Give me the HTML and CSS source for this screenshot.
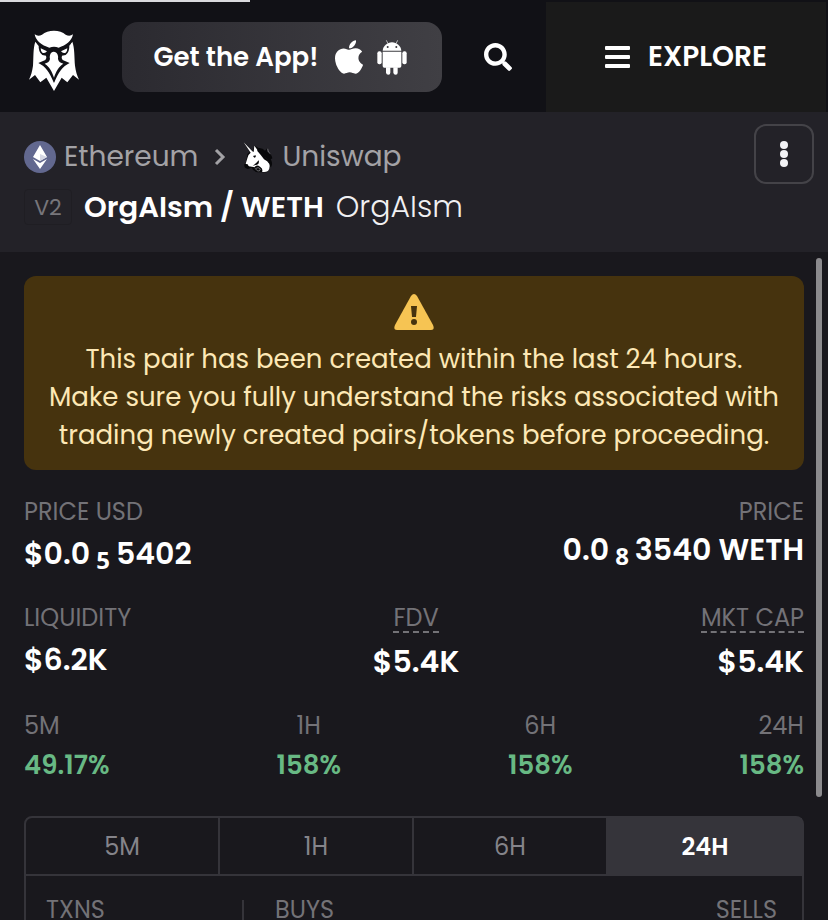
FILE: index.html
```html
<!DOCTYPE html>
<html lang="en">
<head>
<meta charset="utf-8">
<meta name="viewport" content="width=device-width, initial-scale=1">
<title>OrgAIsm / WETH</title>
<link rel="stylesheet" href="styles.css">
</head>
<body>
<div class="progress"></div>
<header class="topbar">
  <a class="logo" href="#" aria-label="Home">
    <svg viewBox="84 93 156 186" width="52" height="62" fill="#fff">
      <path d="M106 128C112 137 119 144 128 148L161 155L195 148C204 144 211 137 217 128C224 146 223 176 225 200C227 216 231 229 237 242L219 228L202 250L185 236L162 276L139 236L121 250L105 228L87 242C93 229 97 216 99 200C101 176 99 146 106 128Z"/>
      <path fill="#111116" d="M106 122Q112 136 116 139Q115 160 127 168L138 170Q141 176 136 183L115 192C137 202 148 220 162 252C176 220 187 202 209 192L188 183Q183 176 186 170L197 168Q209 160 208 139Q212 136 218 122L180 150L162 148L144 150Z"/>
      <path stroke="#111116" stroke-width="10" paint-order="stroke" d="M104 106Q114 114 126 107C143 91 181 91 197 107Q209 114 219 106C215 126 199 139 176 146Q162 141 148 146C124 139 108 126 104 106Z"/>
      <path stroke="#111116" stroke-width="8" paint-order="stroke" d="M161 158C151 159 148 170 150 180C148 189 142 192 134 194C149 204 156 218 162 236C168 218 175 204 190 194C182 192 176 189 174 180C176 170 172 159 161 158Z"/>
      <path d="M122 148L141 157Q135 165 127 161Q122 157 122 148ZM202 148L183 157Q189 165 197 161Q202 157 202 148Z"/>
    </svg>
  </a>
  <a class="app" href="#">
    <span>Get the App!</span>
    <svg viewBox="4 32 376 448" width="28" height="34" fill="#fff"><path d="M318.700 268.700c-.2-36.700 16.400-64.400 50-84.800-18.800-26.900-47.200-41.700-84.700-44.600-35.500-2.800-74.300 20.700-88.500 20.700-15 0-49.400-19.700-76.400-19.700C63.300 141.200 4 184.800 4 273.500q0 39.300 14.400 81.200c12.800 36.700 59 126.700 107.200 125.200 25.200-.6 43-17.900 75.800-17.900 31.800 0 48.300 17.900 76.400 17.900 48.600-.7 90.400-82.500 102.600-119.300-65.200-30.700-61.700-90-61.700-91.900zm-56.600-164.200c27.300-32.400 24.800-61.900 24-72.500-24.100 1.400-52 16.400-67.900 34.900-17.500 19.800-27.800 44.300-25.600 71.900 26.100 2 49.900-11.400 69.500-34.300z"/></svg>
    <svg viewBox="0 0 90 105" width="30" height="35" fill="#fff">
      <path d="M17 32C18 18 31 7 45 7S72 18 73 32Z"/>
      <path d="M28 1L33 11M62 1L57 11" stroke="#fff" stroke-width="2"/>
      <circle cx="32" cy="21" r="3" fill="#38373c"/><circle cx="58" cy="21" r="3" fill="#38373c"/>
      <path d="M17 35H73V78Q73 83 68 83H22Q17 83 17 78Z"/>
      <rect x="1" y="34" width="13" height="39" rx="6"/><rect x="76" y="34" width="13" height="39" rx="6"/>
      <path d="M27 82H40V98Q40 104 34 104T27 98ZM49 82H62V98Q62 104 56 104T49 98Z"/>
    </svg>
  </a>
  <button class="search" aria-label="Search">
    <svg viewBox="0 0 512 512" width="28" height="28" fill="#fff"><path d="M505 442.700L405.300 343c-4.500-4.500-10.600-7-17-7H372c27.600-35.300 44-79.700 44-128C416 93.100 322.900 0 208 0S0 93.100 0 208s93.100 208 208 208c48.300 0 92.700-16.400 128-44v16.300c0 6.400 2.500 12.500 7 17l99.700 99.700c9.400 9.400 24.600 9.400 33.900 0l28.300-28.300c9.400-9.400 9.400-24.600.1-34zM208 336c-70.700 0-128-57.200-128-128 0-70.700 57.200-128 128-128 70.700 0 128 57.200 128 128 0 70.700-57.200 128-128 128z"/></svg>
  </button>
  <button class="explore">
    <svg viewBox="0 0 25 22" width="25" height="22" fill="#fff"><rect width="25" height="4" rx="1"/><rect y="9" width="25" height="4" rx="1"/><rect y="18" width="25" height="4" rx="1"/></svg>
    <span>EXPLORE</span>
  </button>
</header>
<section class="pair">
  <div class="pair-info">
    <nav class="crumbs">
      <svg viewBox="0 0 32 32" width="32" height="32"><circle cx="16" cy="16" r="16" fill="#62688f"/><path fill="#fff" d="M16 4L23 16L16 20L9 16ZM9 18L16 22L23 18L16 28Z"/><path fill="#d5d7e4" d="M16 13L23 16L16 20Z"/></svg>
      <a href="#">Ethereum</a>
      <svg class="chevron" viewBox="0 0 12 18" width="12" height="18"><path d="M2 2L9 9L2 16" fill="none" stroke="#a3a2a6" stroke-width="3"/></svg>
      <svg viewBox="22 27 96 96" width="32" height="32">
        <path fill="#08080a" d="M27 31L53 58L60 41L72 48Q84 47 91 56L99 47L98 58Q111 66 113 79L108 82Q116 94 109 106L105 102Q106 114 97 121H68Q54 116 51 107L40 111Q27 109 29 97L34 91L38 66L45 60Z"/>
        <path fill="#fff" d="M27 31L53 58L57 60L59 41L69 55Q80 59 86 72Q98 81 102 90Q109 104 100 117Q91 122 82 119Q86 112 77 105Q65 96 60 106L52 104L42 103L33 95L39 76Q41 67 48 62Z"/>
        <path fill="#08080a" d="M68 52Q84 50 94 64Q107 72 111 80Q98 73 91 74Q104 84 106 98Q98 86 88 82Q79 69 68 57ZM55 72L63 70Q65 76 59 77ZM31 96L39 97L43 105L34 108ZM72 85Q75 95 67 98L54 101Q65 94 72 85Z"/>
        <path d="M62 110Q71 103 77 111L74 117Q68 119 62 110M99 50L101 60L107 65" fill="none" stroke="#99989d" stroke-width="2"/>
      </svg>
      <a href="#">Uniswap</a>
    </nav>
    <div class="title-row">
      <span class="version">V2</span>
      <h1>OrgAIsm / WETH</h1>
      <span class="name">OrgAIsm</span>
    </div>
  </div>
  <button class="more" aria-label="More options"><svg viewBox="0 0 8 26" width="8" height="26" fill="#f2f2f5"><circle cx="4" cy="4" r="4"/><circle cx="4" cy="13" r="4"/><circle cx="4" cy="22" r="4"/></svg></button>
</section>
<main class="content">
  <div class="scroll-thumb"></div>
  <div class="warning">
    <svg viewBox="0 0 40 36" width="40" height="36"><path fill="#f6c453" d="M17 2Q20 -2 23 2L39 31Q41 36 37 36H3Q-1 36 1 31Z"/><path fill="#46330e" d="M17 12H23L22 23H18Z"/><circle cx="20" cy="28" r="3" fill="#46330e"/></svg>
    <p>This pair has been created within the last 24 hours.<br>Make sure you fully understand the risks associated with trading newly created pairs/tokens before proceeding.</p>
  </div>
  <dl class="stats prices">
    <div><dt>PRICE USD</dt><dd>$0.0<sub>5</sub>5402</dd></div>
    <div><dt>PRICE</dt><dd>0.0<sub>8</sub>3540 WETH</dd></div>
  </dl>
  <dl class="stats">
    <div><dt>LIQUIDITY</dt><dd>$6.2K</dd></div>
    <div class="hinted"><dt><abbr>FDV</abbr></dt><dd>$5.4K</dd></div>
    <div class="hinted"><dt><abbr>MKT CAP</abbr></dt><dd>$5.4K</dd></div>
  </dl>
  <dl class="stats changes">
    <div><dt>5M</dt><dd>49.17%</dd></div>
    <div><dt>1H</dt><dd>158%</dd></div>
    <div><dt>6H</dt><dd>158%</dd></div>
    <div><dt>24H</dt><dd>158%</dd></div>
  </dl>
  <section class="panel">
    <div class="tabs">
      <button>5M</button><button>1H</button><button>6H</button><button class="active">24H</button>
    </div>
    <div class="trades">
      <div class="txns">TXNS</div>
      <div class="sides"><span>BUYS</span><span>SELLS</span></div>
    </div>
  </section>
</main>
</body>
</html>
```
FILE: styles.css
```css
* { box-sizing: border-box; }
body {
  margin: 0;
  height: 100vh;
  display: flex;
  flex-direction: column;
  overflow: hidden;
  background: #19181d;
  color: #fff;
  font-family: Poppins, Inter, sans-serif;
  font-size: 26px;
}
svg { display: block; flex-shrink: 0; }
a { color: inherit; text-decoration: none; }
button { margin: 0; padding: 0; border: 0; background: none; color: inherit; font: inherit; }
.progress {
  position: absolute;
  top: 0;
  left: 0;
  width: 250px;
  height: 2px;
  background: #d9d9dd;
}
.topbar {
  flex: none;
  display: flex;
  align-items: center;
  height: 112px;
  padding: 2px 2px 0 28px;
  background: #111116;
}
.logo { margin: 8px 42px 0 0; }
.app {
  flex: 1;
  display: flex;
  align-items: center;
  justify-content: center;
  gap: 14px;
  height: 70px;
  padding-right: 3px;
  border-radius: 16px;
  background: linear-gradient(90deg, #2b2a30, #403f44);
  font-weight: 600;
  white-space: nowrap;
}
.app span { margin-right: 3px; }
.search { margin: 0 34px 0 42px; }
.explore {
  width: 280px;
  align-self: stretch;
  display: flex;
  align-items: center;
  justify-content: center;
  gap: 18px;
  background: #1a1a1a;
  font-size: 28px;
  font-weight: 600;
}
.pair {
  flex: none;
  display: flex;
  justify-content: space-between;
  align-items: flex-start;
  height: 140px;
  padding: 12px 14px 0 24px;
  background: #232228;
}
.crumbs {
  display: flex;
  align-items: center;
  gap: 8px;
  height: 40px;
  margin-top: 13px;
  color: #a3a2a6;
  font-size: 28px;
}
.chevron { margin: 0 8px; }
.title-row {
  display: flex;
  align-items: center;
  gap: 12px;
  height: 40px;
  margin-top: 10px;
  font-size: 29px;
}
.version {
  display: flex;
  align-items: center;
  justify-content: center;
  width: 48px;
  height: 36px;
  border: 1px solid #1f1e23;
  border-radius: 4px;
  color: #77767b;
  font-size: 22px;
}
h1 { margin: 0; font-size: inherit; font-weight: 600; }
.name { color: #f0f0f2; font-size: 30px; font-weight: 300; }
.more {
  display: flex;
  align-items: center;
  justify-content: center;
  width: 60px;
  height: 60px;
  border: 2px solid #444348;
  border-radius: 12px;
}
.content {
  position: relative;
  flex: 1;
  min-height: 0;
  overflow: hidden;
  padding: 24px 24px 0;
}
.scroll-thumb {
  position: absolute;
  top: 6px;
  right: 6px;
  width: 6px;
  height: 539px;
  border-radius: 3px;
  background: #8b8a8d;
}
.warning {
  display: flex;
  flex-direction: column;
  align-items: center;
  padding: 18px 20px 16px;
  border-radius: 12px;
  background: #46330e;
  color: #fde8b5;
}
.warning p { margin: 10px 0 0; line-height: 38px; text-align: center; }
.stats { display: flex; justify-content: space-between; margin: 24px 0 0; }
.stats div { text-align: center; }
.stats div:first-child { text-align: left; }
.stats div:last-child { text-align: right; }
dt { height: 36px; color: #737277; font-size: 24px; line-height: 36px; }
abbr { display: inline-block; line-height: 26px; border-bottom: 2px dashed #737277; }
dd { height: 40px; margin: 4px 0 0; font-size: 30px; font-weight: 600; line-height: 40px; }
.prices div:last-child dd { margin-top: 0; }
.hinted dd { margin-top: 6px; }
.stats + .stats { margin-top: 26px; }
sub { margin: 0 6px; font-family: "Noto Sans", sans-serif; font-size: 24px; font-weight: 700; line-height: 0; vertical-align: -5px; }
.stats.changes { margin-top: 26px; }
.changes dd { margin: 0; color: #68b984; font-size: 26px; line-height: 42px; }
.panel {
  margin-top: 32px;
  border: 2px solid #35343a;
  border-radius: 8px;
  color: #737277;
  font-size: 24px;
}
.tabs {
  display: grid;
  grid-template-columns: repeat(4, 1fr);
  border-bottom: 2px solid #35343a;
  color: #85848a;
}
.tabs button { height: 56px; border-right: 2px solid #35343a; }
.tabs .active { border-right: 0; background: #35343a; color: #fff; font-weight: 600; }
.trades { display: flex; padding: 16px 25px 24px 20px; line-height: 36px; }
.txns { width: 196px; }
.sides {
  flex: 1;
  display: flex;
  justify-content: space-between;
  margin-top: 8px;
  padding-left: 31px;
  border-left: 2px solid #35343a;
  line-height: 20px;
}
```
